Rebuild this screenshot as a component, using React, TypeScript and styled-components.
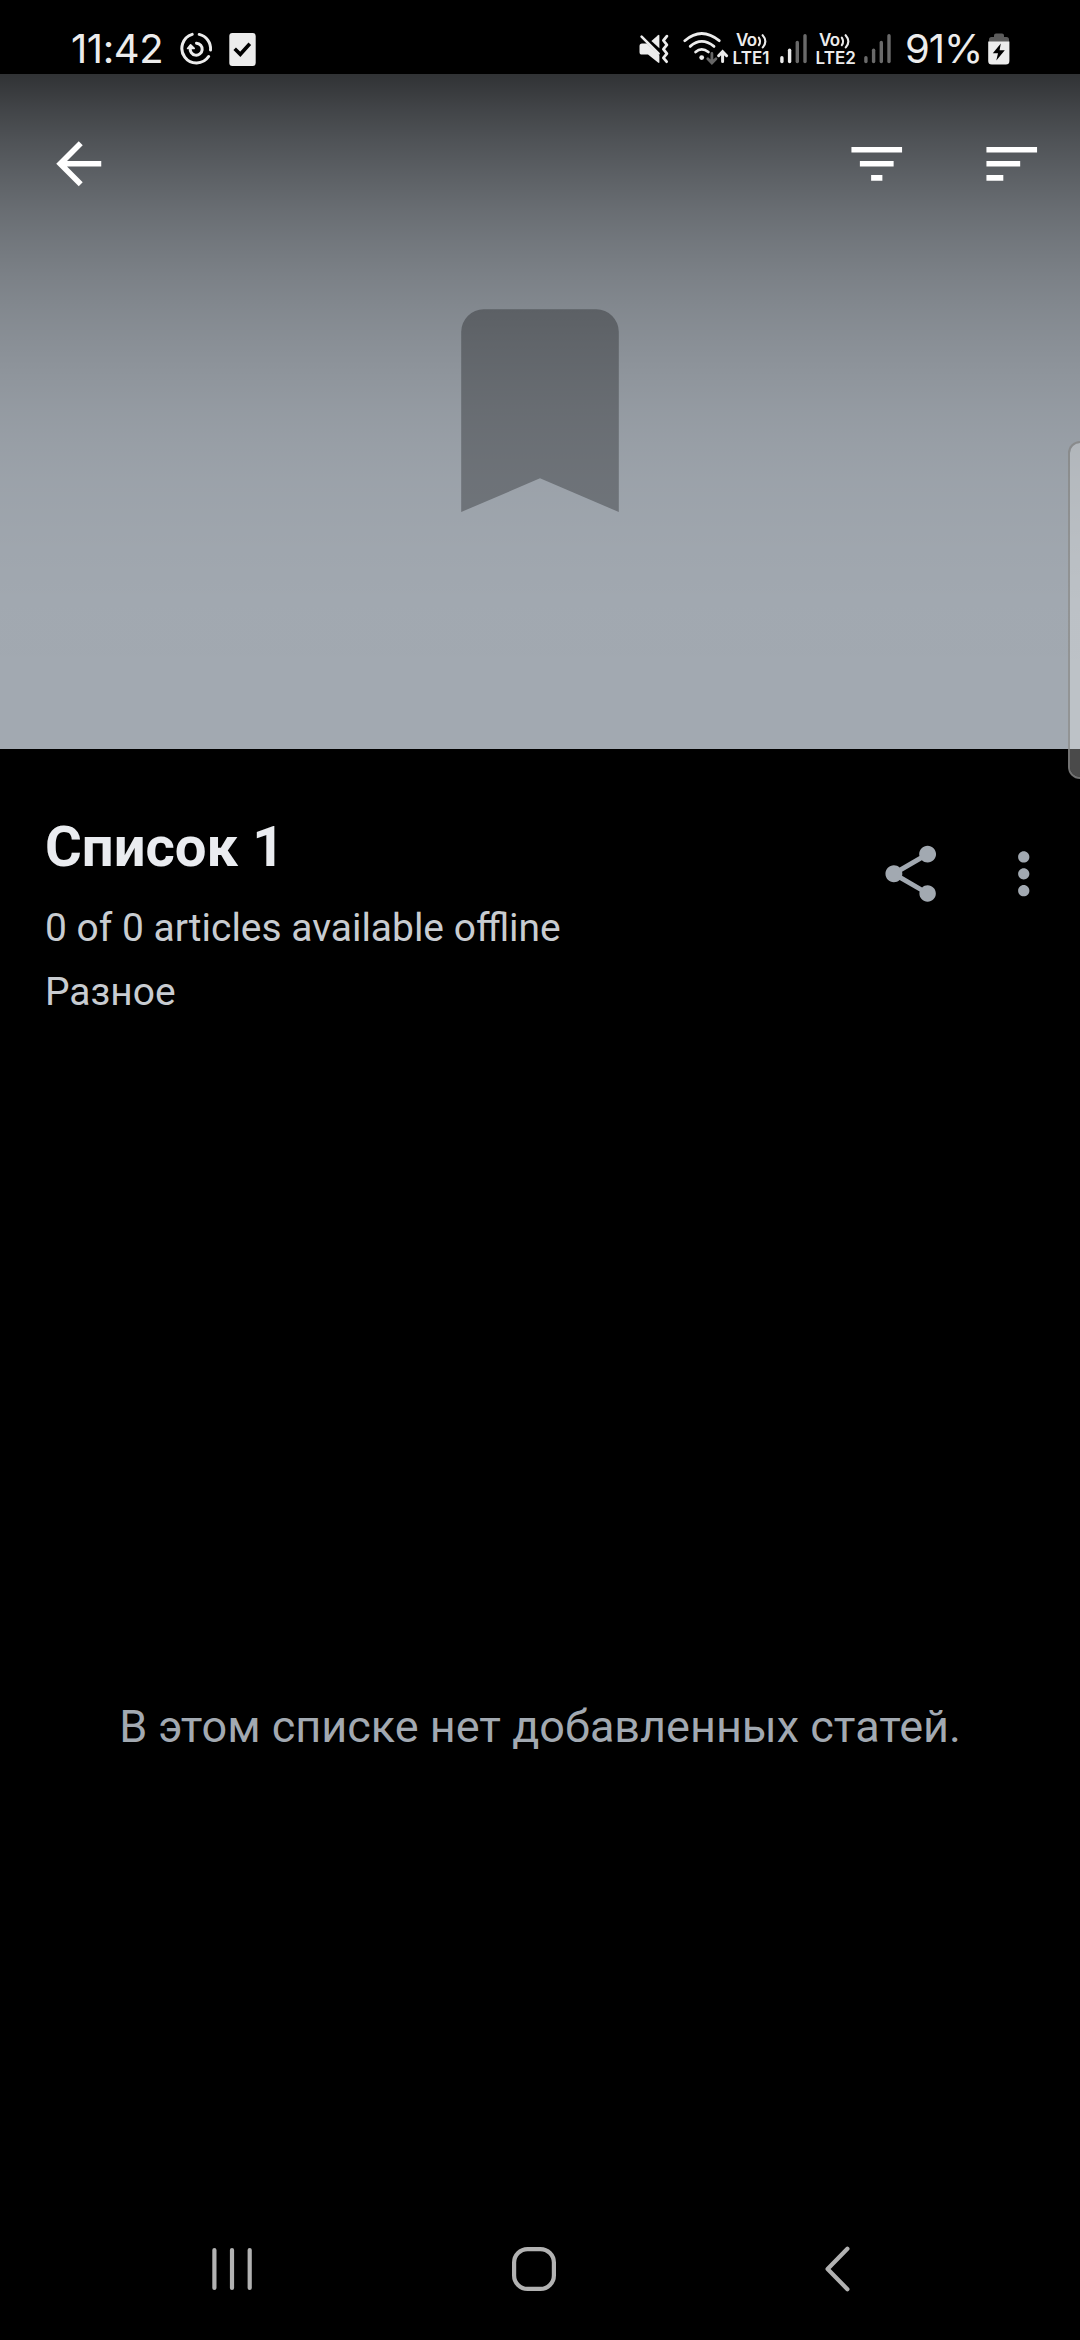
import React from "react";
import styled, { createGlobalStyle } from "styled-components";

const GlobalStyle = createGlobalStyle`
  *, *::before, *::after { box-sizing: border-box; }
  body { margin: 0; background: #000; }
  svg { display: block; flex: none; }
`;

const FADE_STOPS = Array.from({ length: 21 }, (_, i) => {
  const t = i / 20;
  return `rgba(0,0,0,${(0.7 * Math.pow(1 - t, 3)).toFixed(4)}) ${t * 100}%`;
}).join(", ");

const Screen = styled.div`
  position: relative;
  display: flex;
  flex-direction: column;
  width: 1080px;
  height: 2340px;
  overflow: hidden;
  background: #000;
  font-family: Roboto, "Noto Sans", sans-serif;
`;

const StatusBar = styled.header`
  display: flex;
  justify-content: space-between;
  height: 74px;
  padding: 28px 70px 0 71px;
  color: #ececec;
  font-family: Inter, "Noto Sans", sans-serif;
`;

const StatusGroup = styled.div<{ $gap?: number }>`
  display: flex;
  gap: ${(p) => p.$gap ?? 0}px;
  height: 40px;
`;

const StatusText = styled.div<{ $width: number; $spacing: number; $left?: number }>`
  width: ${(p) => p.$width}px;
  margin-left: ${(p) => p.$left ?? 0}px;
  font-size: 40px;
  line-height: 41px;
  letter-spacing: ${(p) => p.$spacing}px;
  white-space: nowrap;
`;

const Carrier = styled.div<{ $left: number }>`
  display: flex;
  flex-direction: column;
  align-items: flex-start;
  width: 40px;
  padding-top: 4px;
  margin-left: ${(p) => p.$left}px;
  font-size: 17px;
  font-weight: 600;
  line-height: 17.5px;
  white-space: nowrap;
`;

const CarrierTop = styled.div`
  display: flex;
  height: 18px;
  padding-left: 4px;
  letter-spacing: -0.6px;
`;

const CarrierName = styled.div`
  padding-left: 0.5px;
  letter-spacing: 0.1px;
`;

const Hero = styled.section`
  display: grid;
  grid-template: 1fr / 1fr;
  height: 675px;
  background: #a2a9b1;
`;

const HeroArt = styled.div`
  grid-area: 1 / 1;
  display: flex;
  justify-content: center;
  padding-top: 235px;
`;

const HeroFade = styled.div`
  grid-area: 1 / 1;
  background: linear-gradient(to bottom, ${FADE_STOPS});
  z-index: 1;
`;

const Toolbar = styled.nav`
  display: flex;
  align-items: flex-start;
  justify-content: space-between;
  padding: 55.5px 34.2px 0 45.2px;
  color: #fff;
`;

const ToolbarEnd = styled.div`
  display: flex;
`;

const IconButton = styled.button<{ $left?: number }>`
  display: block;
  width: 67.5px;
  height: 67.5px;
  margin: 0 0 0 ${(p) => p.$left ?? 0}px;
  padding: 0;
  border: 0;
  background: none;
  color: inherit;
`;

const EdgeHandle = styled.div`
  position: absolute;
  top: 441px;
  right: -4px;
  width: 16px;
  height: 338px;
  border: 2px solid rgba(142, 142, 142, 0.8);
  border-radius: 12px 0 0 12px;
  background: rgba(255, 255, 255, 0.29);
  background-clip: padding-box;
`;

const ListHeader = styled.section`
  display: flex;
  justify-content: space-between;
  padding: 65px 22.9px 0 45px;
`;

const Title = styled.h1`
  margin: 0;
  color: #eaecf0;
  font-size: 56.25px;
  font-weight: 700;
  line-height: 66px;
`;

const Line = styled.p<{ $top: number }>`
  margin: ${(p) => p.$top}px 0 0;
  color: #c8ccd1;
  font-size: 38.95px;
  line-height: 46px;
`;

const HeaderActions = styled.div`
  display: flex;
  padding-top: 25.5px;
  color: #a2a9b1;
`;

const EmptyState = styled.main`
  flex: 1;
  padding-top: 685px;
  color: #a2a9b1;
  font-size: 45px;
  line-height: 53px;
  text-align: center;
`;

const NavBar = styled.footer`
  display: grid;
  grid-template-columns: 303px 313px 30px;
  height: 135px;
  padding: 40px 0 0 207px;
  color: #b2b2b2;
`;

const Icon = ({ d }: { d: string }) => (
  <svg width="67.5" height="67.5" viewBox="0 0 24 24" fill="currentColor">
    <path d={d} />
  </svg>
);

const Recorder = () => (
  <svg width="34" height="40" viewBox="0 0 34 40" fill="none" stroke="currentColor" strokeWidth="3" strokeLinecap="round">
    <path d="M13.2 6.4A14.6 14.6 0 1 0 29.6 28.5" />
    <path d="M20.2 6.4A14.6 14.6 0 0 1 31.5 22" />
    <path d="M17.5 15.2A6 6 0 1 1 11.3 20" />
    <path d="M8.6 20.4L11.6 16.8L15.2 20.4Z" fill="currentColor" strokeWidth="1.6" strokeLinejoin="round" />
  </svg>
);

const CheckBadge = () => (
  <svg width="27" height="40" viewBox="0 0 27 40">
    <rect x="0.3" y="5" width="26.4" height="33" rx="3" fill="#ececec" />
    <path d="M5.7 20.8L11.3 26.3L20.8 15.8" fill="none" stroke="#000" strokeWidth="3.6" />
  </svg>
);

const Muted = () => (
  <svg width="31" height="40" viewBox="0 0 31 40">
    <path d="M0.5 18.2Q0.5 15.6 3 15.6H8L20.4 27.5V34Q20.4 35.6 19 34.6L9 26.6H3Q0.5 26.6 0.5 24Z" fill="currentColor" />
    <path d="M12.4 13L19 7.2Q20.4 6.2 20.4 8V20.2Z" fill="currentColor" />
    <path d="M2.6 8.7L19.6 25.6" stroke="currentColor" strokeWidth="2.6" strokeLinecap="round" />
    <path d="M27.9 8.2L24.4 12.5L27.9 16.9L24.4 21.2L27.9 25.6L24.4 29.9L27.6 33.7" fill="none" stroke="currentColor" strokeWidth="2.8" strokeLinecap="round" strokeLinejoin="round" />
  </svg>
);

const Wifi = () => (
  <svg width="46" height="40" viewBox="0 0 46 40" fill="none" stroke="currentColor" strokeWidth="2.8" strokeLinecap="round" style={{ marginLeft: 13 }}>
    <path d="M1.8 12.7Q18.5 -1.7 36.2 12.7" />
    <path d="M7.2 18.4Q18.5 8.4 31 18.4" />
    <path d="M12.6 24Q18.5 18.8 25.4 24" />
    <circle cx="18.7" cy="29.6" r="2.4" fill="currentColor" stroke="none" />
    <path d="M28.9 25.5V34.5M24.8 30.8L28.9 34.9L33 30.8" stroke="#666" strokeWidth="2.8" />
    <path d="M39.6 33.5V24M35.6 27.7L39.6 23.7L43.6 27.7" strokeWidth="3" />
  </svg>
);

const Signal = ({ level, left }: { level: number; left: number }) => (
  <svg width="27" height="40" viewBox="0 0 27 40" style={{ marginLeft: left }}>
    {[28, 20.6, 12.8, 6].map((y, i) => (
      <rect key={y} x={0.2 + i * 7.7} y={y} width="3.4" height={35.2 - y} rx="1.7" fill={i < level ? "#ececec" : "#6a6a6a"} />
    ))}
  </svg>
);

const VoLte = ({ name, left }: { name: string; left: number }) => (
  <Carrier $left={left}>
    <CarrierTop>
      Vo
      <svg width="12" height="18" viewBox="0 0 12 18" fill="none" stroke="currentColor" strokeWidth="2.1" strokeLinecap="round">
        <path d="M1.8 5.6Q4.4 9.5 1.8 13.2" />
        <path d="M5.6 3.2Q11 9.3 5.8 15.4" />
      </svg>
    </CarrierTop>
    <CarrierName>{name}</CarrierName>
  </Carrier>
);

const Battery = () => (
  <svg width="22" height="40" viewBox="0 0 22 40" style={{ marginLeft: 1 }}>
    <path d="M1 14V11.5Q1 9 3.5 9H6V7.5Q6 5.5 8 5.5H14Q16 5.5 16 7.5V9H18.5Q21 9 21 11.5V14Z" fill="#5c5c5c" />
    <path d="M0.2 13.6H21.4V33Q21.4 36.6 17.8 36.6H3.8Q0.2 36.6 0.2 33Z" fill="#ececec" />
    <path d="M12.8 15.5L4.8 25.3H10L8.3 32.5L16.8 22.3H11.6Z" fill="#000" />
  </svg>
);

export default function App() {
  return (
    <Screen>
      <GlobalStyle />
      <StatusBar>
        <StatusGroup $gap={16}>
          <StatusText $width={92} $spacing={-0.4}>11:42</StatusText>
          <Recorder />
          <CheckBadge />
        </StatusGroup>
        <StatusGroup>
          <Muted />
          <Wifi />
          <VoLte name="LTE1" left={3} />
          <Signal level={2} left={8} />
          <VoLte name="LTE2" left={8} />
          <Signal level={0} left={9} />
          <StatusText $width={82} $spacing={-1} $left={14}>91%</StatusText>
          <Battery />
        </StatusGroup>
      </StatusBar>

      <Hero>
        <HeroArt>
          <svg width="158" height="204" viewBox="0 0 158 204" fill="#72777d">
            <path d="M0.2 203V22.8A22.5 22.5 0 0 1 22.7 0.3H135.3A22.5 22.5 0 0 1 157.8 22.8V203L79 169.3Z" />
          </svg>
        </HeroArt>
        <HeroFade>
          <Toolbar>
            <IconButton aria-label="Back">
              <Icon d="M20 11H7.83l5.59-5.59L12 4l-8 8 8 8 1.41-1.41L7.83 13H20v-2z" />
            </IconButton>
            <ToolbarEnd>
              <IconButton aria-label="Filter">
                <Icon d="M10 18h4v-2h-4v2zM3 6v2h18V6H3zm3 7h12v-2H6v2z" />
              </IconButton>
              <IconButton aria-label="Sort" $left={68.2}>
                <Icon d="M3 18h6v-2H3v2zM3 6v2h18V6H3zm0 7h12v-2H3v2z" />
              </IconButton>
            </ToolbarEnd>
          </Toolbar>
        </HeroFade>
      </Hero>

      <ListHeader>
        <div>
          <Title>Список 1</Title>
          <Line $top={24.5}>0 of 0 articles available offline</Line>
          <Line $top={18}>Разное</Line>
        </div>
        <HeaderActions>
          <IconButton aria-label="Share">
            <Icon d="M18 16.08c-.76 0-1.44.3-1.96.77L8.91 12.7c.05-.23.09-.46.09-.7s-.04-.47-.09-.7l7.05-4.11c.54.5 1.25.81 2.04.81 1.66 0 3-1.34 3-3s-1.34-3-3-3-3 1.34-3 3c0 .24.04.47.09.7L8.04 9.81C7.5 9.31 6.79 9 6 9c-1.66 0-3 1.34-3 3s1.34 3 3 3c.79 0 1.5-.31 2.04-.81l7.12 4.16c-.05.21-.08.43-.08.65 0 1.61 1.31 2.92 2.92 2.92s2.92-1.31 2.92-2.92-1.31-2.92-2.92-2.92z" />
          </IconButton>
          <IconButton aria-label="More" $left={45.3}>
            <Icon d="M12 8c1.1 0 2-.9 2-2s-.9-2-2-2-2 .9-2 2 .9 2 2 2zm0 2c-1.1 0-2 .9-2 2s.9 2 2 2 2-.9 2-2-.9-2-2-2zm0 6c-1.1 0-2 .9-2 2s.9 2 2 2 2-.9 2-2-.9-2-2-2z" />
          </IconButton>
        </HeaderActions>
      </ListHeader>

      <EmptyState>В этом списке нет добавленных статей.</EmptyState>

      <NavBar>
        <svg width="50" height="48" viewBox="0 0 50 48" fill="none" stroke="currentColor" strokeWidth="4.2" strokeLinecap="round">
          <path d="M7.4 5V43M25 5V43M42.7 5V43" />
        </svg>
        <svg width="48" height="48" viewBox="0 0 48 48" fill="none" stroke="currentColor" strokeWidth="4.2">
          <rect x="4.1" y="4.1" width="39.8" height="39.8" rx="13.5" />
        </svg>
        <svg width="30" height="48" viewBox="0 0 30 48" fill="none" stroke="currentColor" strokeWidth="4.2" strokeLinecap="round" strokeLinejoin="round">
          <path d="M24.4 3.8L4.6 24L24.4 44.2" />
        </svg>
      </NavBar>
      <EdgeHandle />
    </Screen>
  );
}
